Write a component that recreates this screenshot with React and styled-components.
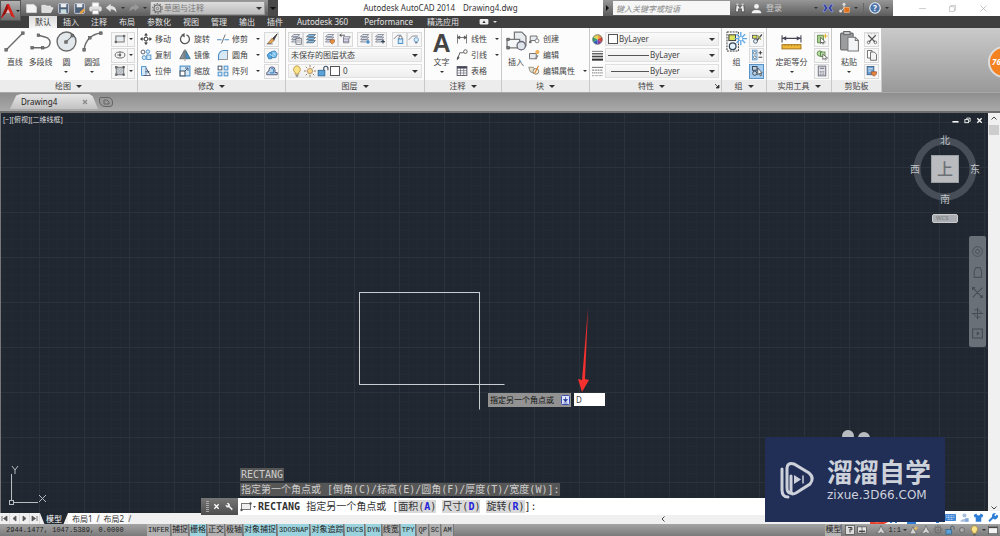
import styled, { createGlobalStyle, css } from 'styled-components';

const uiFont = '"Noto Sans", "Noto Sans CJK SC", sans-serif';
const monoFont = '"DejaVu Sans Mono", "Noto Sans CJK SC", monospace';
const statusFont = '"Liberation Mono", "Noto Sans CJK SC", monospace';

const line = '#6b6b6b';
const blue = '#4a8fc7';
const pale = '#d7e9f7';

const GlobalStyle = createGlobalStyle`
  * {
    box-sizing: border-box;
  }

  body {
    margin: 0;
    overflow: hidden;
    font: 8px/12px ${uiFont};
    color: #444;
  }

  button, input, select {
    margin: 0;
    padding: 0;
    border: 0;
    border-radius: 0;
    background: none;
    color: inherit;
    font: inherit;
    outline: none;
  }

  select {
    appearance: none;
  }

  svg {
    display: block;
    flex: none;
  }
`;

/* ---------- icons ---------- */

const node = (x, y) => <rect x={x - 1.2} y={y - 1.2} width="2.4" height="2.4" fill="#777" stroke="#555" strokeWidth="0.6" />;

const layers = (
  <path d="M5 2h8l-3 3H2zM5 5.5h8l-3 3H2zM5 9h8l-3 3H2z" fill="#dce6ee" stroke="#667" strokeWidth="0.9" />
);

const icons = {
  line: <><path d="M2 18L18 2" stroke={line} strokeWidth="1.3" />{node(2, 18)}{node(18, 2)}</>,
  polyline: (
    <>
      <path d="M2 16h11a5 5 0 0 0 2-10L8 4" fill="none" stroke={line} strokeWidth="1.4" />
      {node(2, 16)}{node(12, 16)}{node(8, 4)}
    </>
  ),
  circle: (
    <>
      <circle cx="10" cy="10" r="9" fill="#e2e8ec" stroke={line} strokeWidth="1.3" />
      <path d="M9.5 10.5L15 5" stroke={line} />
      {node(9.5, 10.5)}{node(15.5, 4.5)}
    </>
  ),
  arc: (
    <>
      <path d="M2 18C3 9 9 3 18 2" fill="none" stroke={line} strokeWidth="1.4" />
      {node(2, 18)}{node(7.5, 6.5)}{node(18, 2)}
    </>
  ),
  rect: <><rect x="2.5" y="4" width="11" height="8" fill="#e6ecf0" stroke={line} strokeWidth="1.2" />{node(13.5, 4)}{node(2.5, 12)}</>,
  ellipse: <><ellipse cx="8" cy="8" rx="6.5" ry="4" fill="none" stroke={line} strokeWidth="1.3" /><path d="M8 3v7M8 8H4" stroke={line} />{node(8, 8)}</>,
  hatch: (
    <>
      <rect x="3" y="3" width="10" height="10" fill="#c9cdd1" stroke={line} strokeWidth="1.2" />
      <path d="M3 8l5-5M3 12l9-9M6 13l7-7M10 13l3-3" stroke="#a0a6ac" />
      {node(3, 3)}{node(13, 3)}{node(3, 13)}{node(13, 13)}
    </>
  ),
  move: (
    <>
      <path d="M8 1v14M1 8h14" stroke="#444" strokeWidth="1.3" />
      <path d="M8 0l2.6 3.4H5.4zM8 16l2.6-3.4H5.4zM0 8l3.4-2.6v5.2zM16 8l-3.4-2.6v5.2z" fill="#444" />
      <rect x="6" y="6" width="4" height="4" fill="#fff" stroke="#444" />
    </>
  ),
  rotate: <><path d="M10 2.6A6 6 0 1 1 5 3" fill="none" stroke="#555" strokeWidth="1.7" /><path d="M7.5 0v6L2.8 2.5z" fill="#555" /></>,
  trim: <><path d="M0 9h6M10 9h6" stroke={blue} strokeWidth="1.6" /><path d="M6 14L11 2" stroke="#666" strokeWidth="1.2" /><path d="M6 9h4" stroke="#999" strokeDasharray="1 1" /></>,
  copy: (
    <>
      <circle cx="4" cy="4" r="2.6" fill="none" stroke="#556" strokeWidth="1.2" />
      <circle cx="10.5" cy="3.5" r="2.4" fill={pale} stroke={blue} strokeWidth="1.2" />
      <circle cx="5.5" cy="11.5" r="2.6" fill={pale} stroke={blue} strokeWidth="1.2" />
      <rect x="9" y="8" width="5.5" height="6" fill={pale} stroke={blue} strokeWidth="1.2" />
    </>
  ),
  mirror: <><path d="M7 2v11H1z" fill="#8a96a2" stroke="#555" /><path d="M9 2v11h6z" fill={blue} stroke="#367" /><path d="M8 0v16" stroke="#555" strokeWidth="0.8" /></>,
  fillet: <><path d="M2 14V9a7 7 0 0 1 7-7h5v12z" fill={pale} /><path d="M2 15V9a7 7 0 0 1 7-7h6" fill="none" stroke={blue} strokeWidth="1.5" /><path d="M14 2v12H2" fill="none" stroke="#777" /></>,
  stretch: <><path d="M2 2h6v12H2z" fill={pale} stroke={blue} strokeWidth="1.2" /><path d="M8 4l6 10H5" fill="none" stroke="#557" strokeWidth="1.2" /><path d="M7 9h5M12 9l-2-2M12 9l-2 2" stroke="#345" fill="none" /></>,
  scale: <><rect x="1.5" y="1.5" width="13" height="13" fill={pale} stroke={blue} strokeWidth="1.5" /><rect x="1.5" y="8" width="6.5" height="6.5" fill="#fff" stroke="#456" strokeWidth="1.4" /><path d="M8 8l4-4M12 8V4H8" fill="none" stroke="#357" strokeWidth="1.2" /></>,
  array: (
    <>
      <rect x="1.5" y="1.5" width="5" height="5" fill="#fff" stroke="#456" strokeWidth="1.3" />
      <rect x="9.5" y="1.5" width="5" height="5" fill={pale} stroke={blue} strokeWidth="1.3" />
      <rect x="1.5" y="9.5" width="5" height="5" fill={pale} stroke={blue} strokeWidth="1.3" />
      <rect x="9.5" y="9.5" width="5" height="5" fill={pale} stroke={blue} strokeWidth="1.3" />
    </>
  ),
  erase: <><path d="M15 1L8.500 7.500l2 2z" fill="#444" stroke="#333" /><path d="M8 7l3 3-5 4H2z" fill="#e5a050" stroke="#864" strokeWidth="0.8" /><path d="M1 14.5h8" stroke="#555" /></>,
  explode: <><path d="M1.500 8l4-4 3 3-1 6-4 0z" fill="#56a8e2" stroke="#2f78b0" /><path d="M7 3.500l5-1 3 4-2 5-5 0-1-4z" fill="#7cc0ee" stroke="#2f78b0" /><path d="M5 7l5 3M10 5l2 3" stroke="#e5f4ff" /></>,
  offset: <><path d="M1 13h14v-3h-3V6.500a4 4 0 0 0-8 0V8L1 10z" fill="#b9d6ec" stroke="#557" strokeWidth="1.2" /><path d="M5 10.500h5V6.500a2 2 0 0 0-3-1.500" fill="none" stroke={blue} strokeWidth="1.4" /></>,
  layerProps: <>{layers}<rect x="8" y="7" width="7" height="8" fill="#fff" stroke="#556" /><path d="M9 9.5h5M9 12h5" stroke="#778" /></>,
  layerStack: <path d="M5 2h9l-3 3H2zM5 6h9l-3 3H2zM5 10h9l-3 3H2z" fill="#7fbbe4" stroke="#456" strokeWidth="0.9" />,
  layerPaint: <>{layers}<path d="M8 9h6v3l-3 3-3-3z" fill="#e8903a" stroke="#854" strokeWidth="0.7" /></>,
  layerPrev: <><path d="M6 5h9l-2 3v5H6z" fill="#eef" stroke="#667" /><path d="M6 8h7M6 11h7" stroke="#667" /><path d="M1 3h7M1 3l2.5-2M1 3l2.5 2" stroke="#333" fill="none" /></>,
  layerFreeze: <>{layers}<circle cx="12" cy="12" r="2.3" fill={blue} /></>,
  layerOff: <>{layers}<path d="M12 9v5M9.5 11.5h5" stroke="#345" strokeWidth="1.5" /></>,
  layerLock: <><path d="M1 8l5-5h5" fill="none" stroke="#667" /><rect x="7" y="8" width="6" height="6" fill={pale} stroke={blue} strokeWidth="1.3" /><path d="M8 8V6a2 2 0 0 1 4 0v2" fill="none" stroke="#556" /></>,
  layerBulb: <><path d="M1 9l5-5h7" fill="none" stroke="#667" /><circle cx="11" cy="9" r="3" fill={pale} stroke={blue} /><path d="M9.5 13h3" stroke="#556" strokeWidth="1.5" /></>,
  bulb: <><path d="M8 1a5 5 0 0 0-2.6 9V12h5V10A5 5 0 0 0 8 1z" fill="#fbe38a" stroke="#b08a2a" /><path d="M6 13.5h4M6.5 15h3" stroke="#555" /></>,
  sun: <><circle cx="8" cy="8" r="3.4" fill="#fbd98a" stroke="#a08050" /><path d="M8 0v3M8 13v3M0 8h3M13 8h3M2.3 2.3l2 2M11.7 11.7l2 2M2.3 13.7l2-2M11.7 4.3l2-2" stroke="#9a8060" strokeWidth="1.3" /></>,
  unlock: <><rect x="1.5" y="7" width="9" height="7.5" fill="#5aa2d8" stroke="#2c5f8a" /><path d="M9 7V4.5a2.8 2.8 0 0 1 5.6 0V7" fill="none" stroke="#456" strokeWidth="1.5" /></>,
  linear: <path d="M2 2v12M14 2v12M2 6h12M2 6l3-2v4zM14 6l-3-2v4z" fill="#555" stroke="#555" />,
  leader: <><circle cx="12.5" cy="3.5" r="2.4" fill="#fff" stroke="#555" strokeWidth="1.2" /><path d="M2 14L5 5h5" fill="none" stroke="#555" strokeWidth="1.2" /><path d="M1 15l.6-5L5 11.5z" fill="#555" /></>,
  table: <><rect x="1.5" y="2" width="13" height="12" fill="#fff" stroke="#556" strokeWidth="1.2" /><path d="M1.5 3.5h13" stroke="#445" strokeWidth="2.5" /><path d="M1.5 7.5h13M1.5 10.7h13M6 4v10M10.3 4v10" stroke="#667" strokeWidth="0.9" /></>,
  insert: (
    <>
      <path d="M8 1h7l4 4v9H8z" fill="#e9edf0" stroke="#777" strokeWidth="1.2" />
      <path d="M1 8h12v8H1z" fill="#f4f6f8" stroke="#777" strokeWidth="1.2" />
      <circle cx="14.500" cy="14" r="4" fill="#dfe6eb" stroke="#667" strokeWidth="1.2" />
      {node(2, 8)}{node(2, 16)}
    </>
  ),
  create: <><path d="M3 4h9v6H3z" fill="#e6ecf0" stroke="#666" strokeWidth="1.2" /><circle cx="12" cy="10.5" r="2.6" fill="#fff" stroke="#666" />{node(3, 12)}</>,
  edit: <><path d="M2 6h9v7H2z" fill="#e6ecf0" stroke="#666" strokeWidth="1.2" /><circle cx="12.5" cy="4" r="2.8" fill="#f3b04e" /><path d="M9 13l3-5 2 1-3 5z" fill="#888" /></>,
  attr: <><path d="M1 3l6 0 3 4-2 4-5-2z" fill="#e8e2d2" stroke="#776" /><circle cx="10.5" cy="8.500" r="3.8" fill="#f7f0da" stroke="#665" /><path d="M14 1l-4 8-1 2" stroke="#d9822b" strokeWidth="1.5" fill="none" /></>,
  wheel: (
    <>
      <path d="M8 8L8 1A7 7 0 0 1 14 4.5z" fill="#e8a23a" />
      <path d="M8 8l6-3.5A7 7 0 0 1 14 11.5z" fill="#d9432f" />
      <path d="M8 8l6 3.5A7 7 0 0 1 8 15z" fill="#8f3fa0" />
      <path d="M8 8v7a7 7 0 0 1-6-3.5z" fill="#2f5fc0" />
      <path d="M8 8l-6 3.5A7 7 0 0 1 2 4.5z" fill="#35a06a" />
      <path d="M8 8L2 4.5A7 7 0 0 1 8 1z" fill="#e3d34a" />
      <circle cx="8" cy="8" r="7" fill="none" stroke="#555" />
    </>
  ),
  lineweight: <><path d="M0 2h16" stroke="#444" /><path d="M0 5.5h16" stroke="#444" strokeWidth="1.8" /><path d="M0 9.5h16" stroke="#444" strokeWidth="2.4" /><path d="M0 14h16" stroke="#333" strokeWidth="3" /></>,
  linetype: <><path d="M0 2h16" stroke="#666" strokeWidth="1.3" /><path d="M0 6h16" stroke="#666" strokeWidth="1.3" strokeDasharray="3 1" /><path d="M0 10h16" stroke="#666" strokeWidth="1.3" strokeDasharray="2 1" /><path d="M0 14h16" stroke="#666" strokeWidth="1.3" strokeDasharray="1 1" /></>,
  group: (
    <>
      <path d="M1 1h12v20H1z" fill="none" stroke="#333" strokeDasharray="2 1" />
      <rect x="3" y="4" width="7" height="6" fill="#dbe45c" stroke="#444" strokeWidth="1.1" />
      <circle cx="7" cy="16" r="3.5" fill="#e6f2fa" stroke="#345" strokeWidth="1.3" />
      <path d="M15.500 1v14M9 8h13M11 3.500l9 9M20 3.500l-9 9" stroke="#5fa8e4" strokeWidth="1.400" />
      <circle cx="15.500" cy="8" r="1.600" fill="#fff" />
    </>
  ),
  ungroup: <><rect x="2" y="3" width="6" height="4" fill="#dbe45c" stroke="#444" /><circle cx="6" cy="11" r="2.6" fill="#e6f2fa" stroke="#345" /><path d="M14.500 2L8 10" stroke="#444" strokeWidth="1.6" /><path d="M9 3l4 6" stroke="#9aa83a" strokeWidth="1.400" /></>,
  groupEdit: <><rect x="2" y="1.500" width="6" height="13" fill={pale} stroke={blue} /><circle cx="5" cy="5" r="1.800" fill="#fff" stroke="#567" /><circle cx="5" cy="11" r="1.800" fill="#fff" stroke="#567" /><path d="M10 5h5M12.500 2.500v5M10 11h5" stroke="#333" strokeWidth="1.200" /></>,
  groupSelect: <><rect x="2" y="2" width="6" height="5" fill="#bcd" stroke="#345" strokeWidth="1.200" /><circle cx="5" cy="11" r="2.800" fill="#bcd" stroke="#345" strokeWidth="1.200" /><path d="M9 4v9l2-2 1.500 3.500 1.500-.8-1.500-3H15z" fill="#fff" stroke="#222" strokeWidth="0.9" /></>,
  measure: (
    <>
      <path d="M1 4v7M19 4v7M1 7h18" stroke="#445" />
      <path d="M1 7l4-2v4zM19 7l-4-2v4z" fill="#445" />
      <rect x="1" y="13" width="18" height="4" fill="#f0b93c" stroke="#a87a1c" />
      <path d="M4 13v1.500M7 13v1.500M10 13v1.500M13 13v1.500M16 13v1.500" stroke="#a87a1c" strokeWidth="0.7" />
    </>
  ),
  quickSelect: <><path d="M2 3h8v10H2z" fill="#a9cf8a" stroke="#4a7a3a" /><path d="M6 6v8l2-2 1.500 3 1-1-1-2h3z" fill="#fff" stroke="#333" strokeWidth="0.8" /><path d="M12.500 1v6M9.500 4h6" stroke="#e8b73a" strokeWidth="1.500" /></>,
  selectAll: <><circle cx="5" cy="6" r="3.500" fill="#b9d9a4" stroke="#4a7a3a" /><rect x="6" y="4" width="6" height="6" fill="#b9d9a4" stroke="#4a7a3a" /><path d="M9 7v7l2-1.500L12.500 15l1-1-1-2h3z" fill="#fff" stroke="#333" strokeWidth="0.8" /></>,
  calc: <><rect x="3" y="1.500" width="10" height="13" fill="#e6e8ea" stroke="#667" strokeWidth="1.200" /><rect x="5" y="3.500" width="6" height="2" fill="#889" /><path d="M5 8.500h6M5 10.500h6M5 12.500h6" stroke="#667" strokeDasharray="1.500 .8" /></>,
  paste: (
    <>
      <rect x="1.500" y="2" width="12" height="16" rx="1" fill="#9b9d9f" stroke="#666" />
      <rect x="4.500" y="0.500" width="6" height="3" fill="#ccc" stroke="#666" />
      <path d="M8.500 6h7l3 3v10h-10z" fill="#f2f4f6" stroke="#777" />
      <path d="M15.500 6v3h3" fill="none" stroke="#777" />
    </>
  ),
  cut: <><path d="M3 3l9 9M13 3l-9 9" stroke="#555" strokeWidth="1.600" /><circle cx="3.500" cy="12.500" r="1.800" fill="none" stroke="#555" /><circle cx="12.500" cy="12.500" r="1.800" fill="none" stroke="#555" /><path d="M1 1h14" stroke="#888" strokeDasharray="1 1" /></>,
  copyClip: <><path d="M2 2h6v10H2z" fill="#fff" stroke="#666" strokeWidth="1.200" /><path d="M6 4h5l3 3v8H6z" fill="#f2f4f6" stroke="#666" strokeWidth="1.200" /></>,
  match: <><rect x="1.500" y="2" width="9" height="11" fill="#6a9fd0" stroke="#357" /><path d="M3 5h6M3 8h4" stroke="#fff" /><path d="M7 9h7v3l-3 3-4-3z" fill="#e8843a" stroke="#843" strokeWidth="0.8" /></>,
  newFile: <path d="M2 3h9l3 3v7H2z" fill="#f4f4f4" stroke="#ddd" />,
  open: <path d="M1 4h5l1 1h5v2h3l-3 6H1z" fill="#ddd" stroke="#f4f4f4" strokeWidth="0.8" />,
  save: <><rect x="2" y="2" width="12" height="12" rx="1" fill="#4a5f78" stroke="#dde" /><rect x="4.500" y="2.500" width="7" height="4" fill="#eee" /><rect x="4.500" y="9" width="7" height="5" fill="#cdd" /></>,
  saveAs: <><rect x="2" y="2" width="12" height="12" rx="1" fill="#4a5f78" stroke="#dde" /><rect x="4.500" y="2.500" width="7" height="4" fill="#eee" /><path d="M8 13l5-5 2 2-5 5z" fill="#e8a040" /></>,
  print: <><path d="M4 1h8v5H4z" fill="#fff" stroke="#ccc" /><rect x="1" y="6" width="14" height="5" rx="1" fill="#ddd" stroke="#eee" /><path d="M4 10h8v5H4z" fill="#fff" stroke="#999" /></>,
  undo: <path d="M1 7l6-5v3c5 0 7 3 7 8-2-3-4-4-7-4v3z" fill="#e2e2e2" />,
  redo: <path d="M15 7L9 2v3C4 5 2 8 2 13c2-3 4-4 7-4v3z" fill="#999" />,
  gear: <><circle cx="8" cy="8" r="5" fill="none" stroke="#666" strokeWidth="1.500" /><circle cx="8" cy="8" r="1.800" fill="none" stroke="#666" /><circle cx="8" cy="8" r="7" fill="none" stroke="#777" strokeWidth="1.800" strokeDasharray="2 2.400" /></>,
  binoculars: <><path d="M2 13l1-9h3l1 3h2l1-3h3l1 9h-4V9H6v4z" fill="#eee" stroke="#333" strokeWidth="0.8" /><path d="M3 3h3M10 3h3" stroke="#eee" strokeWidth="1.500" /></>,
  person: <><circle cx="8" cy="5" r="3.500" fill="#f1f1f1" /><path d="M1 15c0-4 3-5 7-5s7 1 7 5z" fill="#f1f1f1" /></>,
  exchange: <path d="M1 3h3l4 5-4 5H1l3-5zM15 3h-3L8 8l4 5h3l-3-5z" fill="#2d3f9a" stroke="#aab4ee" strokeWidth="0.700" />,
  a360: <><path d="M8 2v6M8 8l-5 5M8 8l5 4" stroke="#ddd" strokeWidth="1.300" /><circle cx="8" cy="3" r="2" fill="#ddd" /><circle cx="3.500" cy="12" r="2" fill="#ddd" /><rect x="8" y="7" width="7" height="7" fill="#e2711d" stroke="#ffc890" strokeWidth="0.700" /></>,
  help: <><circle cx="8" cy="8" r="7" fill="#4d74a8" stroke="#e8eef6" strokeWidth="1.500" /><text x="8" y="12" textAnchor="middle" fontSize="11" fontWeight="700" fill="#fff">?</text></>,
  minimize: <path d="M2 8h12" stroke="#aaa" />,
  restore: <><rect x="2.500" y="5" width="8.500" height="8.500" fill="none" stroke="#aaa" /><path d="M5 5V2.500h8.500V11H11" fill="none" stroke="#aaa" /></>,
  close: <path d="M3 3l10 10M13 3L3 13" stroke="#aaa" strokeWidth="1.200" />,
  ribbonToggle: <><rect x="1" y="3" width="14" height="9" rx="2" fill="#eee" /><path d="M8 5.500l2.500 4h-5z" fill="#333" /></>,
  docMin: <path d="M1 11h14" stroke="#fff" strokeWidth="3.500" />,
  docRestore: <><rect x="2" y="6" width="8" height="7" fill="none" stroke="#fff" strokeWidth="2" /><path d="M6 4V2.500h8V10h-2" fill="none" stroke="#fff" strokeWidth="2" /></>,
  docClose: <path d="M3 3l10 10M13 3L3 13" stroke="#fff" strokeWidth="3" />,
  wrench: <path d="M14 12.500L8.500 7A4 4 0 0 0 3 2l2.500 2.500L4 6.500 1.500 4.500A4 4 0 0 0 7 9.500l5 5z" fill="currentColor" />,
  wrenchUp: <path d="M2 12.500L7.500 7A4 4 0 0 1 13 2l-2.500 2.500L12 6l2.500-2.500A4 4 0 0 1 9 9.500l-5 5z" fill="#2d7cd6" />,
  shirt: <path d="M5 2L1 4.500 2.500 8 4 7.500V14h8V7.500l1.500.5L15 4.500 11 2a3 3 0 0 1-6 0z" fill="#2d7cd6" />,
  keyboard: <><rect x="0" y="3" width="16" height="10" rx="1" fill="#3f86d8" /><path d="M2 5.500h12M2 8h12M4 10.700h8" stroke="#fff" strokeDasharray="1.500 .8" /></>,
  user: <><circle cx="8" cy="5" r="3" fill="#a9bfdc" /><path d="M2 14c0-5 12-5 12 0z" fill="#a9bfdc" /><path d="M9 9h5v5H9z" fill="#7fa7d8" /></>,
  layoutPage: <><rect x="1" y="1" width="14" height="14" fill="#ddd" stroke="#444" /><path d="M5 4h6v4l-3-2v6" fill="none" stroke="#333" strokeWidth="1.500" /></>,
  layoutSplit: <><rect x="1" y="3" width="14" height="10" fill="#e4e4e4" stroke="#444" /><path d="M8 3v10" stroke="#444" /><path d="M3 10h10" stroke="#333" strokeWidth="2" /></>,
  annot: <path d="M8 1l3 7 4 5H9l-1-2-1 2H1l4-5z" fill="#d6d6d6" stroke="#444" strokeWidth="0.800" />,
  annotSun: <><path d="M6 3l3 6 3 5H1l3-5z" fill="#d6d6d6" stroke="#555" strokeWidth="0.800" /><path d="M11 1l1 3 3 .5-3 2-1 3-1-3-3-1 3-1z" fill="#f0c35a" /></>,
  screen: <><rect x="1" y="2" width="14" height="12" fill="#f2f2f2" stroke="#444" /><path d="M1 4h14" stroke="#444" strokeWidth="2" /></>,
  dot: <circle cx="8" cy="8" r="4" fill="#aaa" stroke="#555" />,
  navWheel: <><circle cx="8" cy="8" r="6" fill="none" stroke="#4b5158" strokeWidth="1.200" /><circle cx="8" cy="8" r="2.500" fill="none" stroke="#4b5158" strokeWidth="1.200" /></>,
  navPan: <path d="M4 14V6l2-4h5l2 4v8z" fill="none" stroke="#4b5158" strokeWidth="1.300" />,
  navZoom: <path d="M2 2l12 12M14 2L2 14M2 5V2h3M14 11v3h-3" fill="none" stroke="#454b52" strokeWidth="1.300" />,
  navOrbit: <path d="M8 1v14M1 8h14M4 4c3-2 8 0 8 4M12 12c-3 2-8 0-8-4" fill="none" stroke="#454b52" strokeWidth="1.200" />,
  navMotion: <><rect x="2" y="2.500" width="12" height="11" fill="none" stroke="#454b52" strokeWidth="1.300" /><path d="M7 5.500l4 2.500-4 2.500z" fill="#454b52" /></>
};

function Icon({ name, size = 12, box = 16 }) {
  return (
    <svg width={size} height={size} viewBox={`0 0 ${box} ${box}`} aria-hidden="true">
      {icons[name]}
    </svg>
  );
}

const Caret = styled.span`
  flex: none;
  width: 0;
  height: 0;
  border: ${({ $big }) => ($big ? 3 : 2)}px solid transparent;
  border-top-color: ${({ $color }) => $color || '#333'};
  border-bottom: 0;
`;

/* ---------- title bar ---------- */

const Window = styled.div`
  position: relative;
  min-height: 100vh;
  display: flex;
  flex-direction: column;
  overflow: hidden;
  background: #222831;
`;

const TitleBar = styled.header`
  display: flex;
  height: 16px;
  background: #fff;
`;

const greyBar = css`
  background: linear-gradient(#979797, #5c5c5c);
`;

const AppButton = styled.button`
  position: relative;
  z-index: 2;
  width: 21px;
  height: 21px;
  display: flex;
  align-items: center;
  justify-content: center;
  gap: 1px;
  border: 1px solid #555;
  background: linear-gradient(#b4b4b4, #6e6e6e);
`;

const QuickAccess = styled.div`
  ${greyBar}
  display: flex;
  align-items: center;
  gap: 3px;
  padding: 0 3px 0 4px;
`;

const BarButton = styled.button`
  display: flex;
  align-items: center;
  justify-content: center;
  min-width: 12px;
  color: #ccc;
`;

const WorkspacePicker = styled.label`
  display: flex;
  align-items: center;
  gap: 1px;
  width: 115px;
  height: 14px;
  padding: 0 2px 0 1px;
  border: 1px solid #999;
  background: linear-gradient(#ddd, #bbb);
  color: #777;

  select {
    flex: 1;
    min-width: 0;
  }
`;

const BarMenu = styled.button`
  width: 10px;
  height: 16px;
  display: grid;
  place-items: center;
  background: #4a4a4a;
`;

const Caption = styled.h1`
  flex: 1;
  margin: 0;
  display: flex;
  justify-content: center;
  gap: 8px;
  font-size: 8px;
  font-weight: 400;
  line-height: 16px;
  color: #333;
  white-space: nowrap;
`;

const InfoCenter = styled.div`
  ${greyBar}
  flex: 0 0 290px;
  display: flex;
  align-items: center;
  gap: 4px;
  padding: 0 4px 0 3px;
  color: #ccc;
`;

const SearchInput = styled.input`
  width: 117px;
  height: 14px;
  padding: 0 3px;
  background: #f6f6f6;
  font-style: italic;

  &::placeholder {
    color: #888;
    opacity: 1;
  }
`;

const Spacer = styled.span`
  flex: 1;
`;

const Divider = styled.span`
  width: 1px;
  height: 10px;
  margin: 0 1px;
  background: #666;
`;

const WindowControls = styled.div`
  flex: 0 0 107px;
  display: flex;
  align-items: center;
  justify-content: space-between;
  padding: 0 11px 0 23px;
`;

/* ---------- ribbon ---------- */

const TabBar = styled.nav`
  display: flex;
  align-items: center;
  height: 12px;
  padding-left: 29px;
  background: #3f3f3f;
`;

const Tab = styled.button`
  height: 12px;
  padding: 0 ${({ $latin }) => ($latin ? 8 : 6)}px;
  line-height: 12px;
  white-space: nowrap;
  color: ${({ $active }) => ($active ? '#333' : '#e4e4e4')};
  background: ${({ $active }) => ($active ? 'linear-gradient(#dcdcdc, #f4f4f4)' : 'none')};
`;

const ToggleTab = styled(Tab)`
  display: flex;
  align-items: center;
  gap: 4px;
  padding: 0 14px;
`;

const Ribbon = styled.div`
  display: flex;
  border-bottom: 1px solid #a8a8a8;
  background: linear-gradient(#cacaca, #999);
`;

const Panel = styled.section`
  flex: 0 0 ${({ $width }) => $width}px;
  display: flex;
  flex-direction: column;
  border-right: 1px solid #c8c8c8;
  background: #fcfcfc;
`;

const PanelBody = styled.div`
  flex: 1;
  display: flex;
  justify-content: space-between;
  padding: 3px 2px 1px;
`;

const PanelTitle = styled.h2`
  display: flex;
  align-items: center;
  margin: 0;
  height: 12px;
  background: #ececec;
  font-size: 8px;
  font-weight: 400;
`;

const PanelName = styled.span`
  flex: 1;
  display: flex;
  align-items: center;
  justify-content: center;
  gap: 5px;
`;

const BigRow = styled.div`
  display: flex;
  flex: 1;
  padding-right: ${({ $tail }) => $tail || 0}px;
`;

const BigButton = styled.button`
  flex: 1 1 0;
  min-width: 0;
  display: flex;
  flex-direction: column;
  align-items: center;
  justify-content: flex-start;
  gap: 3px;
  white-space: nowrap;

  svg {
    margin-bottom: 1px;
  }
`;

const Letter = styled.span`
  height: 21px;
  margin-bottom: 1px;
  color: #444;
  font: 700 25px/24px "Liberation Sans", sans-serif;
`;

const Stack = styled.div`
  display: grid;
  grid-auto-rows: 16px;
  align-items: center;
`;

const WideStack = styled(Stack)`
  flex: 1;
`;

const Columns = styled.div`
  display: grid;
  grid-template-columns: 39px 38px 47px 15px;
  grid-auto-rows: 16px;
  align-items: center;
`;

const SmallButton = styled.button`
  display: flex;
  align-items: center;
  gap: 3px;
  height: 16px;
  white-space: nowrap;

  ${Caret} {
    margin-left: 5px;
  }
`;

const ToolButton = styled.button`
  width: 15px;
  height: 15px;
  display: grid;
  place-items: center;
  border: 1px solid ${({ $active }) => ($active ? '#5b93c6' : '#dadada')};
  background: ${({ $active }) => ($active ? '#a4cdf0' : '#f7f7f7')};
`;

const SplitButton = styled.button`
  width: 24px;
  height: 15px;
  display: grid;
  grid-template-columns: 15px 7px;
  place-items: center;
  border: 1px solid #dadada;
  background: linear-gradient(90deg, #f7f7f7 15px, #dadada 15px, #dadada 16px, #f7f7f7 16px);
`;

const ToolGroups = styled.div`
  display: flex;
  justify-content: space-between;
`;

const ToolPair = styled.div`
  display: flex;
`;

const Field = styled.label`
  display: flex;
  align-items: center;
  gap: 1px;
  height: 14px;
  padding: 0 3px 0 2px;
  border: 1px solid #e0e0e0;
  background: linear-gradient(#fafafa, #eee);

  select {
    flex: 1;
    min-width: 0;
    height: 12px;
    line-height: 12px;
  }
`;

const PropertyRow = styled.div`
  display: grid;
  grid-template-columns: 11px 1fr;
  align-items: center;
  gap: 2px;
`;

const Swatch = styled.span`
  flex: none;
  width: 10px;
  height: 10px;
  border: 1px solid #555;
  background: #fff;
`;

const Rule = styled.span`
  flex: none;
  width: ${({ $width }) => $width}px;
  height: 1px;
  margin-left: ${({ $inset }) => $inset}px;
  background: #555;
`;

/* ---------- drawing area ---------- */

const FileTabs = styled.div`
  display: flex;
  align-items: flex-end;
  height: 20px;
  padding: 0 10px 2px;
  border-bottom: 2px solid #6e6e6e;
  background: linear-gradient(#8e8e8e, #a9a9a9);
`;

const FileTab = styled.button`
  display: flex;
  align-items: center;
  justify-content: space-between;
  width: 88px;
  height: 15px;
  padding: 0 10px 0 11px;
  border-radius: 8px 8px 0 0;
  clip-path: polygon(0 100%, 7% 10%, 12% 0, 90% 0, 94% 15%, 100% 100%);
  background: linear-gradient(#e6e6e6, #c2c2c2);
  color: #222;
`;

const NewTab = styled.button`
  width: 14px;
  height: 10px;
  margin: 0 0 2px 1px;
  border: 1px solid #666;
  border-radius: 2px 5px 3px 6px;
  background: #999;
  display: grid;
  place-items: center;
`;

const Workspace = styled.main`
  flex: 1;
  display: flex;
`;

const Canvas = styled.div`
  position: relative;
  flex: 1;
  border-left: 1px solid #777;
  background-color: #212730;
  background-image:
    linear-gradient(90deg, #2a323b 1px, transparent 1px),
    linear-gradient(#2a323b 1px, transparent 1px),
    linear-gradient(90deg, #232a33 1px, transparent 1px),
    linear-gradient(#232a33 1px, transparent 1px);
  background-size: 45px 45px, 45px 45px, 9px 9px, 9px 9px;
  background-position: 38px 0, 0 9px, 2px 0, 0 0;
`;

const Drawing = styled.svg`
  position: absolute;
  left: 0;
  top: 0;
`;

const ViewLabel = styled.div`
  padding: 1px 2px;
  color: #ddd;
  font-size: 7px;
`;

const DocControls = styled.div`
  position: absolute;
  top: 4px;
  right: 3px;
  display: flex;
`;

const ViewCube = styled.div`
  position: absolute;
  top: 20px;
  right: 7px;
  display: flex;
  flex-direction: column;
  align-items: center;
  gap: 8px;
`;

const WcsButton = styled.button`
  width: 26px;
  height: 9px;
  padding-left: 3px;
  border: 1px solid #ccc;
  border-radius: 2px;
  background: #aaaeb4;
  color: #777;
  font-size: 6px;
  line-height: 7px;
  text-align: left;
`;

const NavBar = styled.div`
  position: absolute;
  top: 123px;
  right: 2px;
  width: 17px;
  height: 111px;
  padding: 9px 0 7px;
  display: flex;
  flex-direction: column;
  align-items: center;
  justify-content: space-between;
  border-radius: 2px;
  background: #6a7077;
`;

const Prompt = styled.div`
  position: absolute;
  left: 487px;
  top: 280px;
  display: flex;
  gap: 3px;
`;

const PromptText = styled.label`
  display: flex;
  align-items: center;
  justify-content: space-between;
  width: 83px;
  height: 14px;
  padding: 0 1px 0 2px;
  background: #929292;
  color: #111;
  white-space: nowrap;
`;

const PromptInput = styled.input`
  width: 31px;
  height: 13px;
  padding: 0 2px;
  background: #fff;
`;

const UcsIcon = styled.svg`
  position: absolute;
  left: 0;
  bottom: 5px;
`;

const CommandDock = styled.div`
  position: absolute;
  left: 200px;
  right: 43px;
  bottom: -2px;
  z-index: 1;
  font: 10px/13px ${monoFont};
`;

const History = styled.p`
  width: fit-content;
  margin: 0 0 2px 39px;
  padding: 0 1px;
  background: #565656;
  color: #ccc;
  white-space: nowrap;
`;

const CommandLine = styled.div`
  display: flex;
  align-items: center;
  gap: 2px;
  height: 17px;
  background: #fff;
  color: #333;
  white-space: pre;
`;

const Grip = styled.div`
  width: 37px;
  height: 17px;
  display: flex;
  align-items: center;
  justify-content: space-evenly;
  background: linear-gradient(#777, #4c4c4c);
  color: #f0f0f0;
`;

const Option = styled.button`
  background: #d9d9d9;
  line-height: 13px;

  b {
    color: #2424d8;
  }
`;

const VerticalScroll = styled.div`
  flex: 0 0 12px;
  display: flex;
  flex-direction: column;
  align-items: center;
  gap: 2px;
  background: #f0f0f0;
`;

const ScrollButton = styled.button`
  width: 12px;
  height: 10px;
  display: grid;
  place-items: center;
`;

const Thumb = styled.div`
  width: 10px;
  height: 10px;
  background: #cdcdcd;
`;

/* ---------- bottom bars ---------- */

const LayoutBar = styled.div`
  display: flex;
  align-items: center;
  height: 11px;
  background: #f0f0f0;
`;

const Stepper = styled.button`
  width: 10px;
  height: 11px;
  display: grid;
  place-items: center;
  border-right: 1px solid #ddd;
`;

const LayoutTab = styled.button`
  height: 11px;
  padding: 0 ${({ $active }) => ($active ? 6 : 4)}px;
  line-height: 11px;
  color: ${({ $active }) => ($active ? '#fff' : '#333')};
  background: ${({ $active }) => ($active ? '#212730' : '#fafafa')};
  clip-path: ${({ $active }) => ($active ? 'polygon(0 0, 100% 0, 84% 100%, 16% 100%)' : 'none')};
`;

const HorizontalScroll = styled.div`
  flex: 1;
  display: flex;
  align-items: center;
  justify-content: center;
  padding-left: 194px;
`;

const StatusBar = styled.footer`
  display: flex;
  align-items: center;
  height: 12px;
  background: linear-gradient(#a4a4a4, #7a7a7a);
  color: #222;
  font: 7px/12px ${statusFont};
  white-space: pre;
`;

const Coordinates = styled.output`
  width: 147px;
  padding-left: 6px;
`;

const Toggle = styled.button`
  height: 12px;
  margin-right: 1px;
  padding: 0 ${({ $latin }) => ($latin ? 1 : 0)}px;
  border: 1px solid #777;
  border-width: 0 1px 0 0;
  font-size: ${({ $latin }) => ($latin ? 7 : 8)}px;
  background: ${({ $active }) => ($active ? '#9ad3de' : '#b0b0b0')};
`;

const StatusTools = styled.div`
  display: flex;
  align-items: center;
  gap: 2px;
  margin-left: auto;
  padding-right: 2px;
`;

const Gap = styled.span`
  width: 5px;
`;

/* ---------- overlays ---------- */

const InputTray = styled.div`
  position: absolute;
  right: 0;
  bottom: 12px;
  width: 130px;
  height: 13px;
  display: flex;
  align-items: center;
  justify-content: flex-end;
  gap: 3px;
  padding-right: 2px;
  background: #fff;
  z-index: 2;
`;

const TrayLogo = styled.svg`
  position: absolute;
  left: 0;
  top: 0;
`;

const Watermark = styled.aside`
  position: absolute;
  right: 55px;
  bottom: 14px;
  z-index: 3;
  display: flex;
  align-items: center;
  gap: 12px;
  width: 180px;
  height: 85px;
  padding-left: 15px;
  background: #212e56;
  color: #cdd1da;
`;

const Brand = styled.div`
  display: flex;
  flex-direction: column;
  gap: 5px;

  strong {
    font: 700 26px/26px "Noto Sans CJK SC", sans-serif;
  }

  span {
    font: 12px/12px "DejaVu Sans", sans-serif;
  }
`;

const Ears = styled.svg`
  position: absolute;
  right: 128px;
  bottom: 92px;
`;

const Badge = styled.button`
  position: absolute;
  top: 46px;
  right: -20px;
  width: 32px;
  height: 32px;
  padding-left: 2px;
  border: 2px solid #ddd;
  border-radius: 50%;
  background: #f58220;
  color: #fff;
  font: italic 700 8px/12px ${uiFont};
  text-align: left;
  z-index: 3;
`;

const isLatin = (text) => /^[\w ]+$/.test(text);

const tabs = ['默认', '插入', '注释', '布局', '参数化', '视图', '管理', '输出', '插件', 'Autodesk 360', 'Performance', '精选应用'];

const drawTools = [['line', '直线'], ['polyline', '多段线'], ['circle', '圆', true], ['arc', '圆弧', true]];

const modifyTools = [
  ['move', '移动'], ['rotate', '旋转'], ['trim', '修剪', true], ['erase'],
  ['copy', '复制'], ['mirror', '镜像'], ['fillet', '圆角', true], ['explode'],
  ['stretch', '拉伸'], ['scale', '缩放'], ['array', '阵列', true], ['offset']
];

const layerTools = [['layerProps', 'layerStack'], ['layerPaint', 'layerPrev'], ['layerFreeze', 'layerOff'], ['layerLock', 'layerBulb']];

const toggles = [
  ['INFER'], ['捕捉'], ['栅格', true], ['正交'], ['极轴'], ['对象捕捉', true], ['3DOSNAP', true],
  ['对象追踪', true], ['DUCS', true], ['DYN', true], ['线宽'], ['TPY', true], ['QP'], ['SC'], ['AM']
];

const steps = ['M1 1v5M6 1v5L2.500 3.500z', 'M5 1v5L2 3.500z', 'M2 1v5l3-2.500z', 'M6 1v5M1 1v5l3.500-2.500z'];

function Big({ icon, label, arrow, box = 20 }) {
  return (
    <BigButton type="button">
      <Icon name={icon} size={21} box={box} />
      {label}
      {arrow && <Caret />}
    </BigButton>
  );
}

function Small({ icon, label, arrow }) {
  return (
    <SmallButton type="button">
      <Icon name={icon} />
      {label}
      {arrow && <Caret />}
    </SmallButton>
  );
}

function Tool({ icon, active }) {
  return (
    <ToolButton type="button" $active={active} aria-label={icon}>
      <Icon name={icon} />
    </ToolButton>
  );
}

function RibbonPanel({ title, width, arrow = true, launcher, children }) {
  return (
    <Panel $width={width}>
      <PanelBody>{children}</PanelBody>
      <PanelTitle>
        <PanelName>{title}{arrow && <Caret $big />}</PanelName>
        {launcher && <svg width="8" height="8" viewBox="0 0 8 8"><path d="M2 2l3 3M6 3v3H3z" fill="#333" stroke="#333" strokeWidth="0.800" /></svg>}
      </PanelTitle>
    </Panel>
  );
}

function Title() {
  return (
    <TitleBar>
      <AppButton type="button" aria-label="AutoCAD">
        <svg width="14" height="16" viewBox="0 0 14 16">
          <path d="M6 1h2l6 14-4-2-1-3H5l-4 5H0z" fill="#d5221c" />
          <path d="M6 1l1 5-2 4-5 5z" fill="#8f1410" />
          <path d="M7 6l2 4H5z" fill="#e9b8b4" />
        </svg>
        <Caret $color="#222" />
      </AppButton>
      <QuickAccess>
        {['newFile', 'open', 'save', 'saveAs', 'print', 'undo'].map((name) => (
          <BarButton key={name} type="button" aria-label={name}><Icon name={name} size={13} /></BarButton>
        ))}
        <Caret />
        <BarButton type="button" aria-label="redo"><Icon name="redo" /></BarButton>
        <Caret />
        <WorkspacePicker>
          <Icon name="gear" size={11} />
          <select aria-label="Workspace"><option>草图与注释</option></select>
          <Caret $big />
        </WorkspacePicker>
      </QuickAccess>
      <BarMenu type="button" aria-label="Customize"><Caret $big $color="#111" /></BarMenu>
      <Caption><span>Autodesk AutoCAD 2014</span><span>Drawing4.dwg</span></Caption>
      <InfoCenter>
        <svg width="3" height="6" viewBox="0 0 3 6"><path d="M0 0l3 3-3 3z" fill="#111" /></svg>
        <SearchInput aria-label="Search" placeholder="键入关键字或短语" />
        <BarButton type="button" aria-label="Find"><Icon name="binoculars" /></BarButton>
        <BarButton type="button" aria-label="Account"><Icon name="person" size={11} /></BarButton>
        <span>登录</span>
        <Spacer />
        <Caret />
        <BarButton type="button" aria-label="Exchange"><Icon name="exchange" /></BarButton>
        <BarButton type="button" aria-label="A360"><Icon name="a360" /></BarButton>
        <Caret />
        <Divider />
        <BarButton type="button" aria-label="Help"><Icon name="help" /></BarButton>
        <Caret />
      </InfoCenter>
      <WindowControls>
        {['minimize', 'restore', 'close'].map((name) => (
          <BarButton key={name} type="button" aria-label={name}><Icon name={name} size={9} /></BarButton>
        ))}
      </WindowControls>
    </TitleBar>
  );
}

function Property({ icon, label, children }) {
  return (
    <PropertyRow>
      <Icon name={icon} size={11} />
      <Field>
        {children}
        <select aria-label={label}><option>ByLayer</option></select>
        <Caret $big />
      </Field>
    </PropertyRow>
  );
}

function RibbonArea() {
  return (
    <Ribbon>
      <RibbonPanel title="绘图" width={138}>
        <BigRow $tail={6}>
          {drawTools.map(([icon, label, arrow]) => <Big key={icon} icon={icon} label={label} arrow={arrow} />)}
        </BigRow>
        <Stack>
          {['rect', 'ellipse', 'hatch'].map((name) => (
            <SplitButton key={name} type="button" aria-label={name}>
              <Icon name={name} />
              <Caret />
            </SplitButton>
          ))}
        </Stack>
      </RibbonPanel>
      <RibbonPanel title="修改" width={148}>
        <Columns>
          {modifyTools.map(([icon, label, arrow]) => (
            label ? <Small key={icon} icon={icon} label={label} arrow={arrow} /> : <Tool key={icon} icon={icon} />
          ))}
        </Columns>
      </RibbonPanel>
      <RibbonPanel title="图层" width={139}>
        <WideStack>
          <ToolGroups>
            {layerTools.map((pair) => (
              <ToolPair key={pair[0]}>
                {pair.map((name) => <Tool key={name} icon={name} />)}
              </ToolPair>
            ))}
          </ToolGroups>
          <Field>
            <select aria-label="图层状态"><option>未保存的图层状态</option></select>
            <Caret $big />
          </Field>
          <Field>
            <Icon name="bulb" />
            <Icon name="sun" />
            <Icon name="unlock" />
            <Swatch />
            <select aria-label="图层"><option>&nbsp;0</option></select>
            <Caret $big />
          </Field>
        </WideStack>
      </RibbonPanel>
      <RibbonPanel title="注释" width={77}>
        <BigRow>
          <BigButton type="button"><Letter>A</Letter>文字<Caret /></BigButton>
        </BigRow>
        <Stack>
          <Small icon="linear" label="线性" arrow />
          <Small icon="leader" label="引线" arrow />
          <Small icon="table" label="表格" />
        </Stack>
      </RibbonPanel>
      <RibbonPanel title="块" width={88}>
        <BigRow><Big icon="insert" label="插入" /></BigRow>
        <Stack>
          <Small icon="create" label="创建" />
          <Small icon="edit" label="编辑" />
          <Small icon="attr" label="编辑属性" arrow />
        </Stack>
      </RibbonPanel>
      <RibbonPanel title="特性" width={132} launcher>
        <WideStack>
          <Property icon="wheel" label="颜色"><Swatch /></Property>
          <Property icon="lineweight" label="线宽"><Rule $width={41} $inset={0} /></Property>
          <Property icon="linetype" label="线型"><Rule $width={38} $inset={3} /></Property>
        </WideStack>
      </RibbonPanel>
      <RibbonPanel title="组" width={45}>
        <BigRow><Big icon="group" label="组" box={22} /></BigRow>
        <Stack>
          <Tool icon="ungroup" />
          <Tool icon="groupEdit" />
          <Tool icon="groupSelect" active />
        </Stack>
      </RibbonPanel>
      <RibbonPanel title="实用工具" width={65}>
        <BigRow><Big icon="measure" label="定距等分" arrow /></BigRow>
        <Stack>
          <Tool icon="quickSelect" />
          <Tool icon="selectAll" />
          <Tool icon="calc" />
        </Stack>
      </RibbonPanel>
      <RibbonPanel title="剪贴板" width={50} arrow={false}>
        <BigRow><Big icon="paste" label="粘贴" arrow /></BigRow>
        <Stack>
          <Tool icon="cut" />
          <Tool icon="copyClip" />
          <Tool icon="match" />
        </Stack>
      </RibbonPanel>
    </Ribbon>
  );
}

function Compass() {
  return (
    <ViewCube>
      <svg width="72" height="73" viewBox="0 0 72 73" fontSize="10" textAnchor="middle" fill="#bfc2c6">
        <circle cx="36" cy="36" r="28" fill="none" stroke="#474e58" strokeWidth="7" />
        <rect x="22.500" y="22.500" width="27" height="27" fill="#b9bbbe" stroke="#9b9ea2" />
        <text x="36" y="42" fontSize="16" fontWeight="500" fill="#6d7074">上</text>
        <text x="36" y="11">北</text>
        <text x="36" y="70">南</text>
        <text x="6" y="40">西</text>
        <text x="66" y="40">东</text>
      </svg>
      <WcsButton type="button">WCS</WcsButton>
    </ViewCube>
  );
}

function CommandWindow() {
  return (
    <CommandDock>
      <History>RECTANG</History>
      <History>指定第一个角点或 [倒角(C)/标高(E)/圆角(F)/厚度(T)/宽度(W)]:</History>
      <CommandLine>
        <Grip>
          <svg width="3" height="12"><path d="M1.500 0v12" stroke="#aaa" strokeWidth="3" strokeDasharray="1 1" /></svg>
          <Icon name="docClose" size={7} />
          <Icon name="wrench" size={9} />
        </Grip>
        <svg width="16" height="12" viewBox="0 0 16 12">
          <rect x="1.500" y="2.500" width="9" height="6" fill="#eee" stroke="#777" />
          <circle cx="1.500" cy="9" r="1.200" fill="#555" />
          <circle cx="10.500" cy="2.500" r="1.200" fill="#555" />
          <path d="M13 5h3l-1.500 2z" fill="#555" />
        </svg>
        <span>
          <b>RECTANG</b>{' 指定另一个角点或 ['}
          <Option type="button">面积(<b>A</b>)</Option>{' '}
          <Option type="button">尺寸(<b>D</b>)</Option>{' '}
          <Option type="button">旋转(<b>R</b>)</Option>]:
        </span>
      </CommandLine>
    </CommandDock>
  );
}

function DrawingArea() {
  return (
    <Workspace>
      <Canvas>
        <ViewLabel>[−][俯视][二维线框]</ViewLabel>
        <Drawing width="620" height="310" fill="none" stroke="#c9ccd0">
          <rect x="358.500" y="179.500" width="120" height="92" />
          <path d="M478.500 271.500h25M478.500 271.500v25" />
          <path d="M587 195l-3 71 4 1-7 12-4-13 4 1z" fill="#f5302f" stroke="none" />
        </Drawing>
        <DocControls>
          {['docMin', 'docRestore', 'docClose'].map((name) => (
            <BarButton key={name} type="button" aria-label={name}><Icon name={name} size={7} /></BarButton>
          ))}
        </DocControls>
        <Compass />
        <NavBar>
          {['navWheel', 'navPan', 'navZoom', 'navOrbit', 'navMotion'].map((name) => (
            <BarButton key={name} type="button" aria-label={name}><Icon name={name} size={13} /></BarButton>
          ))}
        </NavBar>
        <Prompt>
          <PromptText htmlFor="prompt">
            指定另一个角点或
            <svg width="9" height="10" viewBox="0 0 9 10">
              <rect x="0.500" y="0.500" width="8" height="9" rx="1" fill="#dfe6ff" stroke="#3d4fae" />
              <path d="M4.500 2v3M2.500 4.500l2 2.500 2-2.500zM2.500 8h4" fill="#25368f" stroke="#25368f" strokeWidth="0.700" />
            </svg>
          </PromptText>
          <PromptInput id="prompt" defaultValue="D" />
        </Prompt>
        <UcsIcon width="50" height="44" fill="none" stroke="#b9bcc0">
          <path d="M10.500 36V10M13 38.500h24" />
          <rect x="8.500" y="36.500" width="4" height="4" />
          <path d="M11 2l3 4 3-4M14 6v4M38 31l7 7M45 31l-7 7" />
        </UcsIcon>
        <CommandWindow />
      </Canvas>
      <VerticalScroll>
        <ScrollButton type="button" aria-label="Scroll up"><svg width="6" height="4"><path d="M0.500 3.500L3 1l2.500 2.500" fill="none" stroke="#444" /></svg></ScrollButton>
        <Thumb />
        <Spacer />
        <ScrollButton type="button" aria-label="Scroll down"><svg width="6" height="4"><path d="M0.500 0.500L3 3 5.500 0.500" fill="none" stroke="#444" /></svg></ScrollButton>
      </VerticalScroll>
    </Workspace>
  );
}

function Bottom() {
  return (
    <>
      <LayoutBar>
        {steps.map((d) => (
          <Stepper key={d} type="button" aria-label="Layout step">
            <svg width="7" height="7"><path d={d} fill="#555" stroke="#555" strokeWidth="0.800" /></svg>
          </Stepper>
        ))}
        <LayoutTab type="button" $active>模型</LayoutTab>
        <LayoutTab type="button">布局1</LayoutTab>/
        <LayoutTab type="button">布局2</LayoutTab>/
        <HorizontalScroll>
          <svg width="4" height="6"><path d="M3.500 0.500L1 3l2.500 2.500" fill="none" stroke="#444" /></svg>
        </HorizontalScroll>
      </LayoutBar>
      <StatusBar>
        <Coordinates>2944.1477, 1047.5389, 0.0000</Coordinates>
        {toggles.map(([label, active]) => (
          <Toggle key={label} type="button" $active={active} $latin={isLatin(label)}>{label}</Toggle>
        ))}
        <StatusTools>
          <Toggle type="button">模型</Toggle>
          <Icon name="layoutPage" size={10} />
          <Icon name="layoutSplit" size={10} />
          <Gap />
          <Icon name="annot" size={10} />
          <span>1:1</span>
          <Caret />
          <Icon name="annotSun" size={10} />
          <Icon name="annot" size={10} />
          <Icon name="gear" size={10} />
          <Icon name="unlock" size={10} />
          <Icon name="dot" size={10} />
          <Icon name="bulb" size={11} />
          <Caret />
          <Icon name="screen" size={10} />
        </StatusTools>
      </StatusBar>
    </>
  );
}

export default function App() {
  return (
    <Window>
      <GlobalStyle />
      <Title />
      <TabBar>
        {tabs.map((name, index) => (
          <Tab key={name} type="button" $active={index === 0} $latin={isLatin(name)}>{name}</Tab>
        ))}
        <ToggleTab type="button" aria-label="Minimize ribbon">
          <Icon name="ribbonToggle" size={10} />
          <Caret $color="#ddd" />
        </ToggleTab>
      </TabBar>
      <RibbonArea />
      <FileTabs>
        <FileTab type="button">
          Drawing4
          <svg width="6" height="6"><path d="M1 1l4 4M5 1L1 5" stroke="#888" strokeWidth="1.300" /></svg>
        </FileTab>
        <NewTab type="button" aria-label="New drawing">
          <svg width="7" height="6"><path d="M1 1h3l2 2v2H1z" fill="none" stroke="#666" /></svg>
        </NewTab>
      </FileTabs>
      <DrawingArea />
      <Bottom />
      <InputTray>
        <TrayLogo width="75" height="13">
          <path d="M0 11q8 4 17-1" fill="none" stroke="#e8402c" strokeWidth="3" />
          <path d="M20 11h2M25 11h2M37 12h9M66 11h3" stroke="#2d7cd6" strokeWidth="2" />
        </TrayLogo>
        <Icon name="keyboard" size={11} />
        <Icon name="user" size={11} />
        <Icon name="shirt" size={11} />
        <Icon name="wrenchUp" size={11} />
      </InputTray>
      <Ears width="32" height="16" fill="#b9bcc0">
        <circle cx="8" cy="8" r="6" />
        <circle cx="24" cy="10" r="6" />
      </Ears>
      <Watermark>
        <svg width="35" height="38" viewBox="0 0 35 38" fill="none" stroke="#cdd1da" strokeWidth="3" strokeLinecap="round">
          <path d="M2 8v21q0 7 6 7" />
          <path d="M12 32q-5 1-5-5V8q0-7 7-5l15 9q6 5 1 11l-14 9q-6 3-5-3V15" />
          <path d="M14 14l7 4.500-7 4.500z" fill="#cdd1da" stroke="none" />
          <path d="M23 15v7" strokeWidth="1.500" />
        </svg>
        <Brand>
          <strong>溜溜自学</strong>
          <span>zixue.3D66.COM</span>
        </Brand>
      </Watermark>
      <Badge type="button">76</Badge>
    </Window>
  );
}
